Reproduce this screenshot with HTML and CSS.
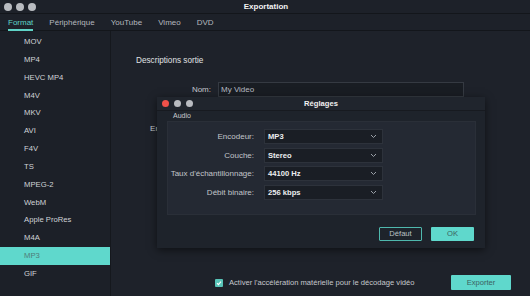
FILE: index.html
```html
<!DOCTYPE html>
<html lang="fr">
<head>
    <meta charset="UTF-8">
    <title>Exportation</title>
    <link rel="stylesheet" href="styles.css">
</head>
<body>
    <div class="titlebar">
        <div class="lights">
            <span class="dot"></span><span class="dot"></span><span class="dot"></span>
        </div>
        <div class="title">Exportation</div>
    </div>
    <div class="tabs">
        <div class="tab active">Format</div>
        <div class="tab">Périphérique</div>
        <div class="tab">YouTube</div>
        <div class="tab">Vimeo</div>
        <div class="tab">DVD</div>
    </div>
    <div class="body">
        <div class="sidebar">
            <div class="item">MOV</div>
            <div class="item">MP4</div>
            <div class="item">HEVC MP4</div>
            <div class="item">M4V</div>
            <div class="item">MKV</div>
            <div class="item">AVI</div>
            <div class="item">F4V</div>
            <div class="item">TS</div>
            <div class="item">MPEG-2</div>
            <div class="item">WebM</div>
            <div class="item">Apple ProRes</div>
            <div class="item">M4A</div>
            <div class="item selected">MP3</div>
            <div class="item">GIF</div>
        </div>
        <div class="main">
            <div class="content">
                <div class="heading">Descriptions sortie</div>
                <div class="row">
                    <label>Nom:</label>
                    <div class="input">My Video</div>
                </div>
                <div class="row second">
                    <label>Enregistrer dans:</label>
                    <div class="input"></div>
                </div>
            </div>
            <div class="footer">
                <div class="check">
                    <span class="box">
                        <svg width="8" height="8" viewBox="0 0 8 8"><polyline points="2,4.2 3.4,5.6 6,2.6" fill="none" stroke="#fff" stroke-width="1.2"/></svg>
                    </span>
                    <span>Activer l'accélération matérielle pour le décodage vidéo</span>
                </div>
                <div class="btn primary export">Exporter</div>
            </div>
        </div>
    </div>

    <div class="dialog">
        <div class="dlg-bar">
            <div class="lights small">
                <span class="dot red"></span><span class="dot"></span><span class="dot"></span>
            </div>
            <div class="dlg-title">Réglages</div>
        </div>
        <div class="dlg-body">
            <div class="section">Audio</div>
            <div class="panel">
                <div class="prow">
                    <label>Encodeur:</label>
                    <div class="select">MP3<svg width="7" height="5" viewBox="0 0 7 5"><polyline points="1,1 3.5,3.5 6,1" fill="none" stroke="#9aa0a8" stroke-width="1"/></svg></div>
                </div>
                <div class="prow">
                    <label>Couche:</label>
                    <div class="select">Stereo<svg width="7" height="5" viewBox="0 0 7 5"><polyline points="1,1 3.5,3.5 6,1" fill="none" stroke="#9aa0a8" stroke-width="1"/></svg></div>
                </div>
                <div class="prow">
                    <label>Taux d'échantillonnage:</label>
                    <div class="select">44100 Hz<svg width="7" height="5" viewBox="0 0 7 5"><polyline points="1,1 3.5,3.5 6,1" fill="none" stroke="#9aa0a8" stroke-width="1"/></svg></div>
                </div>
                <div class="prow">
                    <label>Débit binaire:</label>
                    <div class="select">256 kbps<svg width="7" height="5" viewBox="0 0 7 5"><polyline points="1,1 3.5,3.5 6,1" fill="none" stroke="#9aa0a8" stroke-width="1"/></svg></div>
                </div>
            </div>
            <div class="buttons">
                <div class="btn outline">Défaut</div>
                <div class="btn primary">OK</div>
            </div>
        </div>
    </div>
</body>
</html>
```

FILE: styles.css
```css
body {
    margin: 0;
    width: 530px;
    height: 296px;
    overflow: hidden;
    background-color: #1e222a;
    font-family: "Liberation Sans", Arial, sans-serif;
    font-size: 8px;
    color: #c9ccd1;
    display: flex;
    flex-direction: column;
    position: relative;
}
.titlebar {
    height: 13px;
    display: flex;
    align-items: center;
    position: relative;
    border-bottom: 1px solid #13161b;
    background-color: #1d2129;
}
.lights {
    display: flex;
    gap: 4px;
    padding-left: 4px;
}
.dot {
    width: 8px;
    height: 8px;
    border-radius: 50%;
    background-color: #b9bcc1;
}
.lights.small .dot {
    width: 7px;
    height: 7px;
}
.lights.small {
    gap: 5px;
    padding-left: 5px;
}
.dot.red {
    background-color: #f0514a;
}
.title {
    position: absolute;
    left: 0;
    right: 0;
    text-align: center;
    color: #f2f2f2;
    font-weight: bold;
    padding-left: 2px;
}
.tabs {
    height: 16px;
    display: flex;
    gap: 16px;
    padding-left: 8px;
    border-bottom: 1px solid #13161b;
    background-color: #1d2129;
}
.tab {
    line-height: 15px;
    padding-top: 1px;
    color: #b4b8be;
}
.tab.active {
    color: #5fd3c6;
    border-bottom: 2px solid #5fd3c6;
    height: 14px;
}
.body {
    flex: 1;
    display: flex;
}
.sidebar {
    width: 110px;
    border-right: 1px solid #15181d;
    background-color: #1c2028;
    padding-top: 2px;
}
.item {
    height: 17.85px;
    line-height: 17.85px;
    padding-left: 24px;
    font-size: 7.7px;
    color: #d0d3d7;
}
.item.selected {
    background-color: #5fd8cc;
    color: #4f7c78;
}
.main {
    flex: 1;
    display: flex;
    flex-direction: column;
}
.content {
    flex: 1;
    padding-left: 25px;
}
.heading {
    margin-top: 25px;
    line-height: 10px;
    color: #e0e2e5;
    font-size: 8.2px;
}
.row {
    display: flex;
    align-items: center;
    gap: 7px;
    margin-top: 16px;
}
.row.second {
    margin-top: 24px;
}
.row label {
    width: 75px;
    text-align: right;
    color: #c5c8cd;
}
.input {
    width: 242px;
    height: 13px;
    line-height: 13px;
    padding-left: 2px;
    background-color: #191d23;
    border: 1px solid #353a42;
    color: #b7bbc1;
}
.footer {
    height: 27px;
    display: flex;
    align-items: center;
    justify-content: space-between;
    padding: 0 19px 0 104px;
}
.check {
    display: flex;
    align-items: center;
    gap: 6px;
    color: #c5c8cd;
    font-size: 7.6px;
}
.box {
    width: 8px;
    height: 8px;
    border-radius: 1px;
    background-color: #58c4b8;
    display: flex;
}
.btn {
    height: 14px;
    line-height: 14px;
    text-align: center;
    font-size: 7.6px;
    border-radius: 1px;
    box-sizing: border-box;
}
.btn.primary {
    background-color: #5fd8cc;
    color: #3c625e;
}
.btn.export {
    width: 60px;
    height: 15px;
    line-height: 15px;
}
.btn.outline {
    border: 1px solid #4fb8ad;
    line-height: 12px;
    color: #b9c2c4;
}
.dialog {
    position: absolute;
    left: 157px;
    top: 97px;
    width: 328px;
    height: 151px;
    background-color: #1e232b;
    box-shadow: 0 2px 8px rgba(0, 0, 0, 0.55);
    display: flex;
    flex-direction: column;
}
.dlg-bar {
    height: 13px;
    display: flex;
    align-items: center;
    position: relative;
    border-bottom: 1px solid #171a20;
    background-color: #20252d;
}
.dlg-title {
    position: absolute;
    left: 0;
    right: 0;
    text-align: center;
    color: #f0f0f0;
    font-weight: bold;
    font-size: 7.6px;
}
.dlg-body {
    padding: 0 9px 0 10px;
}
.section {
    height: 10px;
    line-height: 10px;
    padding-left: 6px;
    font-size: 7px;
    color: #c9ccd1;
}
.panel {
    height: 94px;
    box-sizing: border-box;
    background-color: #242933;
    border: 1px solid #2a2f38;
    padding-top: 7px;
    display: flex;
    flex-direction: column;
    gap: 3.5px;
}
.prow {
    display: flex;
    align-items: center;
    gap: 10px;
}
.prow label {
    width: 86px;
    text-align: right;
    color: #c2c5ca;
}
.select {
    width: 119px;
    height: 15px;
    box-sizing: border-box;
    background-color: #1a1e25;
    border: 1px solid #2d323b;
    display: flex;
    align-items: center;
    justify-content: space-between;
    padding: 0 5px 0 3px;
    color: #eceef0;
    font-weight: bold;
    font-size: 7.6px;
}
.buttons {
    display: flex;
    justify-content: flex-end;
    gap: 9px;
    margin-top: 12px;
    padding-right: 2px;
}
.buttons .btn {
    width: 43px;
}
```
